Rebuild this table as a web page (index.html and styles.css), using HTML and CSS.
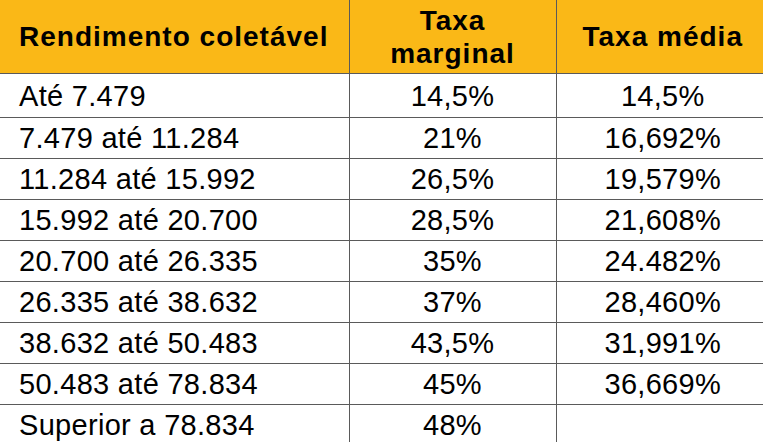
FILE: index.html
```html
<!DOCTYPE html>
<html lang="pt">
<head>
<meta charset="utf-8">
<title>Taxas de IRS</title>
<link rel="stylesheet" href="styles.css">
</head>
<body>
<table class="tax">
  <colgroup>
    <col class="w1">
    <col class="w2">
    <col class="w3">
  </colgroup>
  <thead>
    <tr class="head">
      <th class="c1">Rendimento coletável</th>
      <th class="c2">Taxa<br>marginal</th>
      <th class="c3">Taxa média</th>
    </tr>
  </thead>
  <tbody>
    <tr class="first"><td class="c1">Até 7.479</td><td class="c2">14,5%</td><td class="c3">14,5%</td></tr>
    <tr><td class="c1">7.479 até 11.284</td><td class="c2">21%</td><td class="c3">16,692%</td></tr>
    <tr><td class="c1">11.284 até 15.992</td><td class="c2">26,5%</td><td class="c3">19,579%</td></tr>
    <tr><td class="c1">15.992 até 20.700</td><td class="c2">28,5%</td><td class="c3">21,608%</td></tr>
    <tr><td class="c1">20.700 até 26.335</td><td class="c2">35%</td><td class="c3">24.482%</td></tr>
    <tr><td class="c1">26.335 até 38.632</td><td class="c2">37%</td><td class="c3">28,460%</td></tr>
    <tr><td class="c1">38.632 até 50.483</td><td class="c2">43,5%</td><td class="c3">31,991%</td></tr>
    <tr><td class="c1">50.483 até 78.834</td><td class="c2">45%</td><td class="c3">36,669%</td></tr>
    <tr><td class="c1">Superior a 78.834</td><td class="c2">48%</td><td class="c3"></td></tr>
  </tbody>
</table>
</body>
</html>
```
FILE: styles.css
```css
html, body {
  margin: 0;
  padding: 0;
  overflow: hidden;
  background: #ffffff;
}

.tax {
  border-collapse: collapse;
  table-layout: fixed;
  width: 769px;
  font-family: "Liberation Sans", Arial, sans-serif;
  color: #000000;
}

.w1 { width: 349px; }
.w2 { width: 207px; }
.w3 { width: 213px; }

.tax th,
.tax td {
  padding: 0;
  border: 1px solid #5a5a5a;
  vertical-align: middle;
}

.tax th {
  background: #fab817;
  font-size: 28px;
  font-weight: bold;
  letter-spacing: 1px;
  line-height: 33px;
  height: 73px;
  border-top: none;
}

.tax td {
  font-size: 29px;
  letter-spacing: 0.3px;
  line-height: 32px;
  height: 40px;
}

.tax .first td {
  height: 43px;
}

.tax .c1 {
  text-align: left;
  padding-left: 19px;
  border-left: none;
}

.tax .c2,
.tax .c3 {
  text-align: center;
}

.tax .c3 {
  border-right: none;
}

.tax tbody tr:last-child td {
  border-bottom: none;
}
```
